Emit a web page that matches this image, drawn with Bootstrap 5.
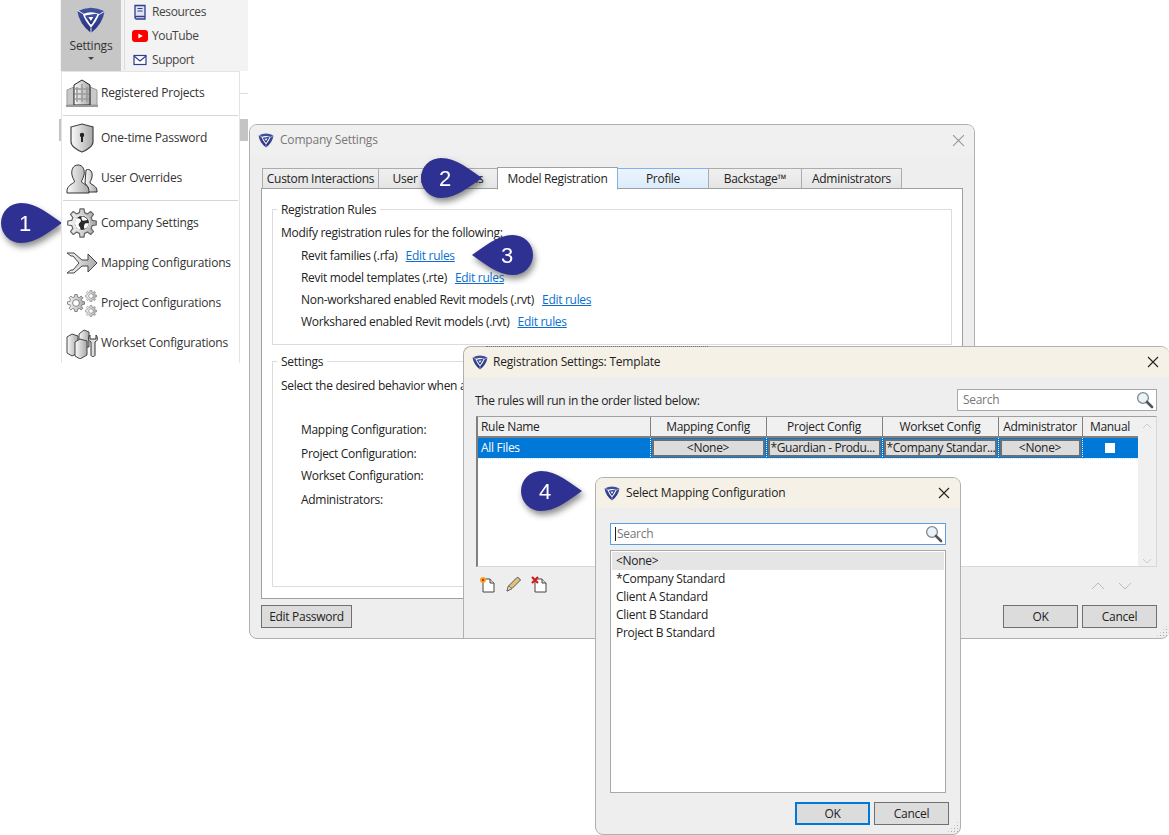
<!DOCTYPE html>
<html lang="en">
<head>
  <meta charset="UTF-8" />
  <title>Company Settings</title>
  <link href="https://cdn.jsdelivr.net/npm/bootstrap@5.3.2/dist/css/bootstrap.min.css" rel="stylesheet">
  <style>
    body { margin: 0; background: #fff; color: #222; font-family: "Open Sans", "Noto Sans", sans-serif; font-size: 12px; line-height: 16px; letter-spacing: -.3px; }
    .stage { position: relative; width: 1169px; height: 835px; overflow: hidden; background: #fff; }

    /* ribbon + dropdown */
    .ribbon { position: absolute; left: 60px; top: 0; width: 188px; height: 71px; background: #f3f3f3; letter-spacing: -.4px; }
    .ribbon-btn { display: flex; flex-direction: column; align-items: center; justify-content: flex-start; width: 60px; height: 71px; margin-left: 1px; background: #c6c6c6; color: #333; border: 0; border-radius: 0; padding: 5px 0 0; font-size: 12px; line-height: 16px; letter-spacing: -.2px; }
    .ribbon-btn svg { display: block; margin: 0 0 4px; }
    .ribbon-caret { display: block; width: 0; height: 0; margin: 3px auto 0; border: 3px solid transparent; border-top: 3px solid #444; border-bottom: 0; }
    .ribbon-links { border-left: 1px solid #dcdcdc; margin-left: 3px; padding: 0 0 0 7px; width: 124px; height: 70px; }
    .ribbon-link { height: 24px; color: #444; }
    .ribbon-link svg { width: 16px; margin-right: 4px; flex: none; }
    .ribbon-strip { position: absolute; left: 239px; top: 93px; width: 9px; height: 48px; border-top: 1px solid #ddd; }
    .ribbon-strip i { display: block; height: 22px; margin-top: 25px; background: #c4c4c4; }
    .ribbon-left { position: absolute; left: 59px; top: 119px; width: 3px; height: 22px; background: #c4c4c4; }

    .dropdown-menu.side-menu { position: absolute; left: 61px; top: 71px; width: 179px; height: 292px; min-width: 0; padding: 0; background: #fff; border: 1px solid #e4e4e4; border-bottom: 0; border-radius: 0; font-size: 12px; letter-spacing: -.21px; }
    .side-menu .dropdown-item { display: flex; align-items: center; height: 40px; padding: 0 0 0 4px; color: #333; }
    .side-menu .first { height: 42px; }
    .side-menu .dropdown-divider { margin: 1px 1px 2px; border-top: 1px solid #d6d6d6; opacity: 1; }
    .side-menu li:nth-child(5) .dropdown-divider { margin-top: 2px; }
    .side-menu .dropdown-item svg { width: 32px; height: 32px; margin-right: 3px; flex: none; }

    /* windows */
    .win { position: absolute; background: #eee; border: 1px solid #b0b0b0; border-radius: 8px; overflow: hidden; display: flex; flex-direction: column; }
    .win-title { display: flex; align-items: center; height: 30px; flex: none; padding-left: 8px; color: #222; background: #f5f1e6; letter-spacing: -.2px; }
    .win-title svg.logo { width: 16px; height: 16px; margin-right: 5px; }
    .win-title .x { margin-left: auto; width: 12px; height: 12px; margin-right: 10px; stroke: #222; }
    .company { left: 249px; top: 124px; width: 726px; height: 515px; }
    .company .win-title { background: #f0f0f0; color: #777; }
    .company .win-title svg.logo, .select .win-title svg.logo { margin-right: 6px; }
    .company .win-title .x { stroke: #999; margin-right: 9px; width: 13px; height: 13px; }
    .reg { left: 463px; top: 346px; width: 706px; height: 293px; overflow: visible; border-radius: 8px 8px 8px 0; border-right: 0; }
    .reg::before { content: ""; position: absolute; left: 22px; top: -1px; width: 222px; border-top: 1px dotted #777; }
    .reg .win-title { border-radius: 8px 8px 0 0; }
    .select { left: 595px; top: 477px; width: 366px; height: 358px; }
    .grip { position: absolute; right: 1px; bottom: 1px; width: 12px; height: 12px; background-image: radial-gradient(#aaa 1px, transparent 1px); background-size: 3px 3px; clip-path: polygon(100% 0, 100% 100%, 0 100%); }

    /* tabs */
    .tabs-wrap { padding: 12px 11px 0; }
    .nav-tabs { border: 0; padding-left: 2px; height: 21px; align-items: flex-end; position: relative; }
    .nav-tabs .nav-link { display: block; height: 21px; padding: 2px 0 0; margin: 0 0 0 -1px; text-align: center; color: #222; border: 1px solid #acacac; border-bottom: 1px solid #a0a0a0; border-radius: 0; background: linear-gradient(#f0f0f0, #e5e5e5); }
    .nav-tabs .nav-link.active { height: 23px; margin-bottom: -1px; padding-top: 3px; background: #fff; border-color: #a0a0a0; border-bottom-color: #fff; color: #222; }
    .nav-tabs .nav-link.hot { background: linear-gradient(#ecf4fc, #dcecfc); border-color: #7eb4ea; border-bottom-color: #a0a0a0; }
    .tab-a { width: 117px; } .tab-b { width: 120px; } .tab-c { width: 121px; } .tab-d { width: 92px; } .tab-e { width: 94px; } .tab-f { width: 101px; }
    .tab-panel { background: #fff; border: 1px solid #a0a0a0; height: 411px; padding: 20px 10px 0; }
    .group { position: relative; border: 1px solid #dcdcdc; padding: 13px 8px 0; color: #222; }
    .group-rules { height: 136px; margin-bottom: 16px; }
    .group-settings { height: 226px; padding-top: 14px; }
    .group-label { position: absolute; left: 4px; top: -8px; padding: 0 4px; background: #fff; }
    .rule-row { height: 22px; padding-left: 20px; display: flex; align-items: center; }
    .rule-row a { margin-left: 8px; color: #0a6fd1; }
    .intro { height: 20px; margin-bottom: 2px; display: flex; align-items: center; }
    .cfg-list { margin: 26px 0 0; padding-left: 20px; list-style: none; }
    .cfg-list li:nth-child(1) { height: 24px; } .cfg-list li:nth-child(2) { height: 22px; } .cfg-list li:nth-child(3) { height: 24px; }
    .company-foot { padding: 6px 11px 0; }

    .btn.wbtn { height: 23px; padding: 0; font-size: 12px; line-height: 20px; letter-spacing: inherit; color: #222; background: #dcdcdc; border: 1px solid #707070; border-radius: 0; }
    .btn.wbtn.w75 { width: 75px; }
    .btn.wbtn.w91 { width: 91px; }
    .btn.wbtn.primary { border: 2px solid #0078d7; line-height: 19px; }

    /* registration settings */
    .reg-body { padding: 12px 12px 0; flex: 1; display: flex; flex-direction: column; }
    .search { display: flex; align-items: center; height: 22px; background: #fff; border: 1px solid #a8a8a8; padding-left: 5px; color: #777; }
    .search svg { margin-left: auto; margin-right: 2px; width: 18px; height: 18px; }
    .reg-search { width: 200px; }
    .reg-top { height: 26px; }
    .reg-top > span { margin-left: -1px; }
    .grid { height: 151px; margin-top: 1px; display: flex; background: #fff; border-top: 1px solid #a0a0a0; border-left: 2px solid #808080; border-bottom: 1px solid #d8d8d8; border-right: 1px solid #d8d8d8; }
    .grid-left { width: 660px; flex: none; }
    .grid-bar { flex: 1; background: #f0f0f0; display: flex; flex-direction: column; justify-content: space-between; align-items: center; padding: 6px 0 2px; }
    .table.rules { table-layout: fixed; width: 660px; margin: 0; --bs-table-bg: transparent; --bs-table-color: #222; font-size: 12px; }
    .rules th, .rules td { padding: 0; font-weight: 400; border: 0; vertical-align: middle; }
    .rules thead th { height: 20px; background: #f0f0f0; text-align: center; border-right: 1px solid #808080; border-bottom: 2px solid #808080; }
    .rules thead th:first-child { text-align: left; padding-left: 3px; }
    .rules thead th:last-child { border-right: 1px solid #808080; }
    .rules tbody td { height: 21px; background: #0078d7; color: #fff; border-right: 1px dotted #fff; border-top: 1px dotted #cfe4f7; border-bottom: 1px dotted #cfe4f7; text-align: center; }
    .rules tbody td:first-child { text-align: left; padding-left: 3px; }
    .c-name { width: 172px; } .c-cfg { width: 116px; } .c-adm { width: 84px; } .c-man { width: 56px; }
    .cell-btn { display: block; height: 18px; margin: 0 1px; line-height: 14px; color: #222; background: #dcdcdc; border: 2px solid #6e6e6e; white-space: nowrap; overflow: hidden; text-align: center; }
    .cell-btn.fit { text-align: left; padding-left: 1px; letter-spacing: -.4px; }
    .cell-check { display: block; width: 10px; height: 10px; margin: 0 auto; background: #fff; border: 0; }
    .reg-tools { height: 38px; padding: 9px 0 0 3px; gap: 9px; }
    .reg-tools svg { width: 17px; height: 17px; }
    .reg-arrows { margin-left: auto; gap: 13px; padding: 6px 25px 0 0; }
    .reg-arrows svg { width: 14px; height: 8px; stroke: #bbb; }

    /* select mapping */
    .sel-body { padding: 15px 14px 0; flex: 1; display: flex; flex-direction: column; }
    .sel-search { height: 22px; border-color: #5a9fe0; padding-left: 4px; }
    .sel-search .caret { width: 1px; height: 14px; background: #222; margin-right: 1px; }
    .list-group.options { height: 243px; margin-top: 5px; padding: 1px; background: #fff; border: 1px solid #a8a8a8; border-radius: 0; }
    .options .list-group-item { height: 18px; padding: 0 0 0 4px; line-height: 18px; background: transparent; border: 0; border-radius: 0; color: #222; }
    .options .list-group-item.active { background: #e5e5e5; color: #222; }
    .sel-foot { padding-top: 9px; margin-right: -3px; gap: 4px; }

    /* callouts */
    .callout { position: absolute; z-index: 5; width: 64px; height: 44px; display: flex; align-items: center; justify-content: center; color: #fff; font-family: "Liberation Sans", Arial, sans-serif; font-size: 22px; letter-spacing: 0; filter: drop-shadow(2px 4px 3px rgba(0, 0, 0, .45)); }
    .callout svg { position: absolute; left: 0; top: 0; width: 64px; height: 44px; fill: #2e3192; }
    .callout span { position: relative; padding: 0 16px 0 0; }
    .callout.flip svg { transform: scaleX(-1); }
    .callout.flip span { padding: 0 0 0 12px; }
    .c1 { left: 1px; top: 202px; } .c2 { left: 421px; top: 157px; } .c3 { left: 469px; top: 234px; } .c4 { left: 521px; top: 470px; }
  </style>
</head>
<body>
<svg class="position-absolute" width="0" height="0" aria-hidden="true">
  <defs>
    <linearGradient id="steel" x1="0" y1="0" x2="1" y2="0"><stop offset="0" stop-color="#fafafa"/><stop offset="1" stop-color="#a8a8a8"/></linearGradient>
    <linearGradient id="navy" x1="0" y1="0" x2="0" y2="1"><stop offset="0" stop-color="#41539f"/><stop offset="1" stop-color="#262f80"/></linearGradient>
    <symbol id="logo" viewBox="0 0 32 32">
      <path d="M1 7Q16 -1 31 7Q29 21 16 31Q3 21 1 7Z" fill="url(#navy)"/>
      <path d="M7 10Q16 6 25 10Q23 17 16 25Q9 17 7 10Z" fill="#fff"/>
      <path d="M11 12.500L21.500 11L16 20Z" fill="none" stroke="url(#navy)" stroke-width="2.600" stroke-linejoin="round"/>
      <path d="M1 6L8 10M31 7L24 11M16 31V25" fill="none" stroke="#fff" stroke-width="1"/>
    </symbol>
    <symbol id="gear" viewBox="0 0 24 24">
      <polygon points="20.25,9.94 23.39,10.4 23.39,13.6 20.25,14.06 19.29,16.38 21.18,18.92 18.92,21.18 16.38,19.29 14.06,20.25 13.6,23.39 10.4,23.39 9.94,20.25 7.62,19.29 5.08,21.18 2.82,18.92 4.71,16.38 3.75,14.06 .61,13.6 .61,10.4 3.75,9.94 4.71,7.62 2.82,5.08 5.08,2.82 7.62,4.71 9.94,3.75 10.4,.61 13.6,.61 14.06,3.75 16.38,4.71 18.92,2.82 21.18,5.08 19.29,7.62" fill="url(#steel)" stroke="#666" stroke-width="1" stroke-linejoin="round"/>
      <circle cx="12" cy="12" r="4.500" fill="#fff" stroke="#666"/>
    </symbol>
    <symbol id="glass" viewBox="0 0 18 18">
      <circle cx="7" cy="7" r="5.4" fill="#eaf4f8" stroke="#7b8a90" stroke-width="1.3"/>
      <path d="M11 11L16 16" stroke="#555" stroke-width="2.6" stroke-linecap="round"/>
    </symbol>
    <symbol id="close" viewBox="0 0 12 12"><path d="M1 1L11 11M11 1L1 11" fill="none" stroke-width="1.1"/></symbol>
    <symbol id="drop" viewBox="0 0 64 44"><path d="M61 21C49 13 36 1 20 1A20 20 0 0 0 20 41C36 41 49 29 61 21Z"/></symbol>
  </defs>
</svg>

<div class="stage">

  <div class="ribbon d-flex">
    <button class="btn ribbon-btn" type="button">
      <svg width="30" height="29"><use href="#logo"/></svg>
      Settings
      <i class="ribbon-caret"></i>
    </button>
    <div class="ribbon-links">
      <div class="ribbon-link d-flex align-items-center">
        <svg height="16" viewBox="0 0 16 16"><path d="M3 1.5H13V12.5H4.5A1.5 1.5 0 0 0 3 14ZM3 14A1.5 1.5 0 0 0 4.5 15H13V12.5" fill="#dfe3f2" stroke="#2f3d8c" stroke-width="1.3"/><path d="M5.5 4.5H10.5M5.5 7H10.5" stroke="#2f3d8c"/></svg>Resources
      </div>
      <div class="ribbon-link d-flex align-items-center">
        <svg height="12" viewBox="0 0 16 12"><rect width="16" height="12" rx="3" fill="#f00"/><path d="M6.4 3.4L10.8 6L6.4 8.6Z" fill="#fff"/></svg>YouTube
      </div>
      <div class="ribbon-link d-flex align-items-center">
        <svg height="12" viewBox="0 0 16 12"><rect x="2" y="1.5" width="12" height="9" fill="#fff" stroke="#2f3d8c" stroke-width="1.2"/><path d="M2 2L8 7L14 2" fill="none" stroke="#2f3d8c" stroke-width="1.2"/></svg>Support
      </div>
    </div>
  </div>
  <div class="ribbon-strip"><i></i></div>
  <div class="ribbon-left"></div>

  <ul class="dropdown-menu show side-menu">
    <li>
      <a class="dropdown-item first" href="#">
        <svg viewBox="0 0 32 32"><path d="M1 28V13L8 10V28ZM31 28V13L24 10V28Z" fill="#c9c9c9" stroke="#999"/><path d="M8 28V8L16 3L24 8V28Z" fill="url(#steel)" stroke="#222"/><path d="M11 10V25M16 7V25M21 10V25M9 12H23M9 17H23M9 22H23" stroke="#9c9c9c" stroke-width="1.6"/><path d="M0 29H32" stroke="#9a9a9a" stroke-width="2"/></svg>
        Registered Projects
      </a>
    </li>
    <li><hr class="dropdown-divider"></li>
    <li>
      <a class="dropdown-item" href="#">
        <svg viewBox="0 0 32 32"><path d="M5 5L16 2L27 5V20C27 24 21 28 16 30C11 28 5 24 5 20Z" fill="url(#steel)" stroke="#444" stroke-width="1.2"/><circle cx="16" cy="13" r="2.2" fill="#222"/><path d="M15 14H17V20H15Z" fill="#222"/></svg>
        One-time Password
      </a>
    </li>
    <li>
      <a class="dropdown-item" href="#">
        <svg viewBox="0 0 32 32"><path d="M20 8C24 6 27 10 26 15C25.500 18 24 19 24 21C26 23 31 24 31 29V30H22V25L19 21Z" fill="url(#steel)" stroke="#333"/><path d="M12 3C17 3 19 8 18 13C17.500 16 15.500 18 15.500 20C18 22 23 24 23 29V31H1V29C1 24 6 22 8.500 20C8.500 18 6.500 16 6 13C5 8 7 3 12 3Z" fill="url(#steel)" stroke="#333"/></svg>
        User Overrides
      </a>
    </li>
    <li><hr class="dropdown-divider"></li>
    <li>
      <a class="dropdown-item" href="#">
        <svg viewBox="0 0 32 32"><use href="#gear" x="1" y="1" width="30" height="30"/><circle cx="16" cy="16" r="7.500" fill="#2b2b2b" stroke="#fff" stroke-width=".8"/><path d="M10.500 11.500C13 11 15 12 15 14C14 16 12 16 13 19C14 20 14.500 21.500 14.500 23C11 22 9 19 9 16C9 14 9.500 12.500 10.500 11.500ZM15.500 9.500C18 9.500 20.500 11 21.500 12.500C20 14 18 13 17 14C16 13 15 11 15.500 9.500ZM19 16.500C20.500 16 22 16 23 16.500C22.500 19.500 20.500 21.500 18.500 22C17.500 20.500 18 18 19 16.500Z" fill="#fff"/></svg>
        Company Settings
      </a>
    </li>
    <li>
      <a class="dropdown-item" href="#">
        <svg viewBox="0 0 32 32"><path d="M1 6H8L16 13H22V7L31 16L22 25V19H16L8 26H1L5 23H7L13 16L7 9H5Z" fill="url(#steel)" stroke="#444" stroke-linejoin="round"/></svg>
        Mapping Configurations
      </a>
    </li>
    <li>
      <a class="dropdown-item" href="#">
        <svg viewBox="0 0 32 32"><use href="#gear" x="1" y="7" width="18" height="18"/><use href="#gear" x="19" y="3" width="12" height="12"/><use href="#gear" x="19" y="18" width="12" height="12"/></svg>
        Project Configurations
      </a>
    </li>
    <li>
      <a class="dropdown-item" href="#">
        <svg viewBox="0 0 32 32"><path d="M13 7L18 3L23 5V20L13 20Z" fill="url(#steel)" stroke="#444"/><path d="M1 10L6 7L12 9V26L6 29L1 26Z" fill="url(#steel)" stroke="#444"/><path d="M9 15L14 12L21 14V28L14 32L9 29Z" fill="url(#steel)" stroke="#444"/><path d="M24 8C22 10 22 14 25 15V28C25 30 29 30 29 28V15C32 14 32 10 30 8V12H24Z" fill="#ddd" stroke="#333"/></svg>
        Workset Configurations
      </a>
    </li>
  </ul>

  <div class="win company">
    <div class="win-title">
      <svg class="logo"><use href="#logo"/></svg>
      Company Settings
      <svg class="x"><use href="#close"/></svg>
    </div>
    <div class="tabs-wrap">
      <ul class="nav nav-tabs">
        <li class="nav-item"><a class="nav-link tab-a" href="#">Custom Interactions</a></li>
        <li class="nav-item"><a class="nav-link tab-b" href="#">User Interactions</a></li>
        <li class="nav-item"><a class="nav-link tab-c active" href="#">Model Registration</a></li>
        <li class="nav-item"><a class="nav-link tab-d hot" href="#">Profile</a></li>
        <li class="nav-item"><a class="nav-link tab-e" href="#">Backstage™</a></li>
        <li class="nav-item"><a class="nav-link tab-f" href="#">Administrators</a></li>
      </ul>
      <div class="tab-panel">
        <div class="group group-rules">
          <span class="group-label">Registration Rules</span>
          <div class="intro">Modify registration rules for the following:</div>
          <div class="rule-row">Revit families (.rfa) <a href="#">Edit rules</a></div>
          <div class="rule-row">Revit model templates (.rte) <a href="#">Edit rules</a></div>
          <div class="rule-row">Non-workshared enabled Revit models (.rvt) <a href="#">Edit rules</a></div>
          <div class="rule-row">Workshared enabled Revit models (.rvt) <a href="#">Edit rules</a></div>
        </div>
        <div class="group group-settings">
          <span class="group-label">Settings</span>
          <div class="intro">Select the desired behavior when a</div>
          <ul class="cfg-list">
            <li>Mapping Configuration:</li>
            <li>Project Configuration:</li>
            <li>Workset Configuration:</li>
            <li>Administrators:</li>
          </ul>
        </div>
      </div>
    </div>
    <div class="company-foot">
      <button class="btn wbtn w91" type="button">Edit Password</button>
    </div>
  </div>

  <div class="win reg">
    <div class="win-title">
      <svg class="logo"><use href="#logo"/></svg>
      Registration Settings: Template
      <svg class="x"><use href="#close"/></svg>
    </div>
    <div class="reg-body">
      <div class="reg-top d-flex align-items-start justify-content-between">
        <span class="pt-1">The rules will run in the order listed below:</span>
        <div class="search reg-search">Search<svg><use href="#glass"/></svg></div>
      </div>
      <div class="grid">
        <div class="grid-left">
          <table class="table rules">
            <colgroup><col class="c-name"><col class="c-cfg"><col class="c-cfg"><col class="c-cfg"><col class="c-adm"><col class="c-man"></colgroup>
            <thead>
              <tr><th>Rule Name</th><th>Mapping Config</th><th>Project Config</th><th>Workset Config</th><th>Administrator</th><th>Manual</th></tr>
            </thead>
            <tbody>
              <tr>
                <td>All Files</td>
                <td><span class="cell-btn">&lt;None&gt;</span></td>
                <td><span class="cell-btn fit">*Guardian - Produ...</span></td>
                <td><span class="cell-btn fit">*Company Standar...</span></td>
                <td><span class="cell-btn">&lt;None&gt;</span></td>
                <td><span class="cell-check"></span></td>
              </tr>
            </tbody>
          </table>
        </div>
        <div class="grid-bar">
          <svg width="10" height="6" viewBox="0 0 10 6"><path d="M1 5L5 1L9 5" fill="none" stroke="#ccc"/></svg>
          <svg width="10" height="6" viewBox="0 0 10 6"><path d="M1 1L5 5L9 1" fill="none" stroke="#ccc"/></svg>
        </div>
      </div>
      <div class="reg-tools d-flex">
        <svg viewBox="0 0 17 17"><path d="M4 3H11L15 7V16H4Z" fill="#fff" stroke="#444"/><path d="M11 3V7H15" fill="#ddd" stroke="#444"/><circle cx="4" cy="4" r="3" fill="#f5a623"/><circle cx="4" cy="4" r="1.200" fill="#e2231a"/></svg>
        <svg viewBox="0 0 17 17"><path d="M2 15L3.500 10L12 1.500C13 1 15 3 15.500 4L7 12.500Z" fill="#e3c27a" stroke="#555"/><path d="M2 15L3.500 10L7 12.500Z" fill="#f3e3c3" stroke="#555" stroke-width=".7"/></svg>
        <svg viewBox="0 0 17 17"><path d="M4 3H11L15 7V16H4Z" fill="#fff" stroke="#444"/><path d="M11 3V7H15" fill="#ddd" stroke="#444"/><path d="M1 1L7 7M7 1L1 7" stroke="#d01c1c" stroke-width="2.200"/></svg>
        <div class="reg-arrows d-flex">
          <svg viewBox="0 0 14 8"><path d="M1 7L7 1L13 7" fill="none"/></svg>
          <svg viewBox="0 0 14 8"><path d="M1 1L7 7L13 1" fill="none"/></svg>
        </div>
      </div>
      <div class="d-flex justify-content-end gap-1">
        <button class="btn wbtn w75" type="button">OK</button>
        <button class="btn wbtn w75" type="button">Cancel</button>
      </div>
    </div>
    <i class="grip"></i>
  </div>

  <div class="win select">
    <div class="win-title">
      <svg class="logo"><use href="#logo"/></svg>
      Select Mapping Configuration
      <svg class="x"><use href="#close"/></svg>
    </div>
    <div class="sel-body">
      <div class="search sel-search"><i class="caret"></i>Search<svg><use href="#glass"/></svg></div>
      <div class="list-group options">
        <div class="list-group-item active">&lt;None&gt;</div>
        <div class="list-group-item">*Company Standard</div>
        <div class="list-group-item">Client A Standard</div>
        <div class="list-group-item">Client B Standard</div>
        <div class="list-group-item">Project B Standard</div>
      </div>
      <div class="sel-foot d-flex justify-content-end">
        <button class="btn wbtn w75 primary" type="button">OK</button>
        <button class="btn wbtn w75" type="button">Cancel</button>
      </div>
    </div>
    <i class="grip"></i>
  </div>

  <div class="callout c1"><svg><use href="#drop"/></svg><span>1</span></div>
  <div class="callout c2"><svg><use href="#drop"/></svg><span>2</span></div>
  <div class="callout c3 flip"><svg><use href="#drop"/></svg><span>3</span></div>
  <div class="callout c4"><svg><use href="#drop"/></svg><span>4</span></div>

</div>
<script src="https://cdn.jsdelivr.net/npm/bootstrap@5.3.2/dist/js/bootstrap.bundle.min.js"></script>
</body>
</html>
